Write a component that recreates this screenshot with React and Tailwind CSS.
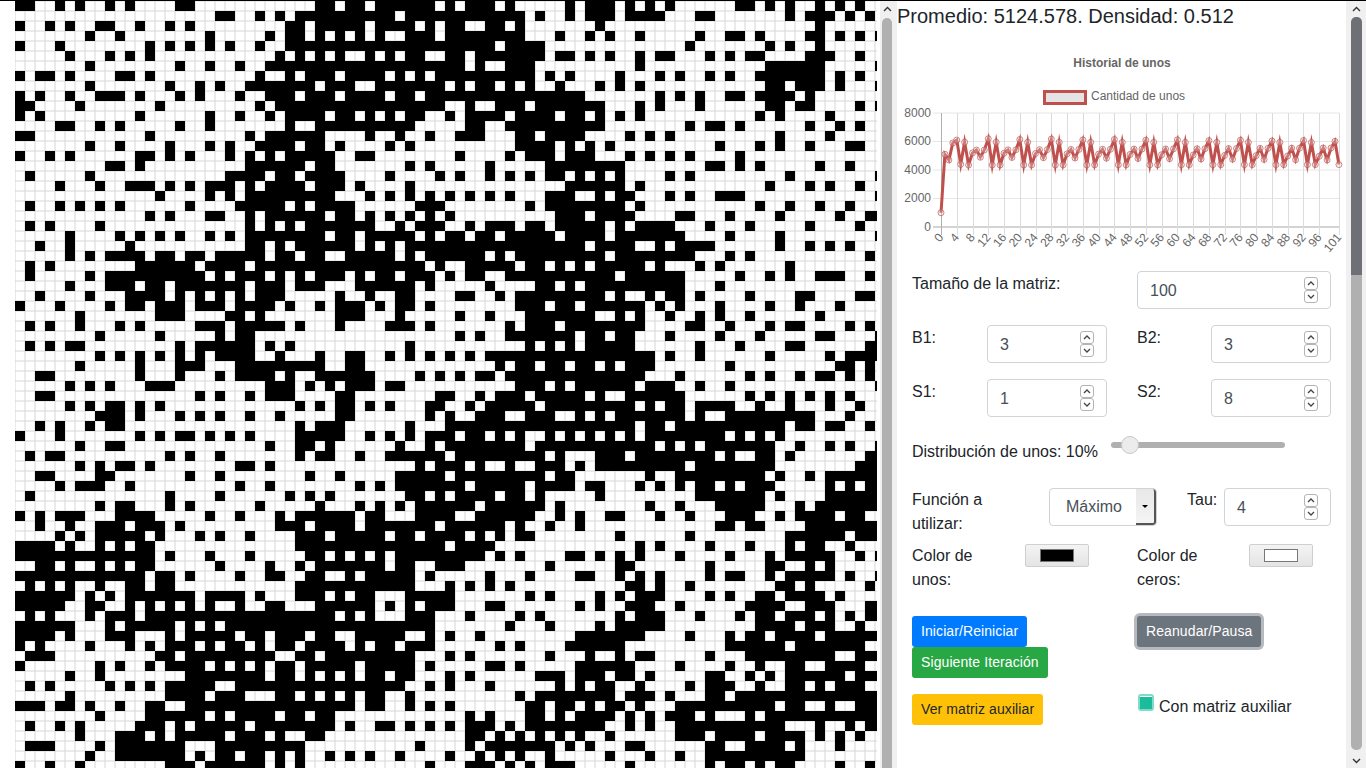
import React from "react";

const A = ["0-1 4 6 9 11 16-17","20-21 24 26 28","0 3 5 8-9 12 15 17 27-28","7 10 19 25 27-28","0 4 13 15 17 19 21 24 27-28","5 9 11 13 26 28","7 16 19 22 25-28","0 2-3 5 10-11 13 24 27","7 15 18 20 23-28","0 2 5 8-10 12 16 18 22 25-27","0-1 6 14 24 26-28","0 2 12 19 22 25 27-28","4-5 8 10 16 19 27","0-1 13 23 25-28","7 10 15 19 21 24-27","0 3 5 12-13 15 17 21 23 25 27-28","9-10 12 23-28","1 7 21-24 26-27","4 8 11-13 15 17 19-21 23 25-28","14 19 21 23-28","1 4 6 8 10 17 22-26 28","13 15 19-20 23 25-28","1 3 8 23 25 27","5 10 12 14 16 19 21 23-28","2 5 11 23-24 26 28","5 7 9-12 14-15 17-18 20-24 26-27","1 3 12-17 19-22 24-28","1 7 9-18 20 22-24 26 28","5 9-11 13-14 16-22 24-26 28","2 7 11-14 16 18 20 22 24-26","0 4 9 11-12 14-16 18-20 22-25 27","6 14-16 21-22 24","1 3 6 10 12 18-20 22-26 28","8 14 20 22-23","1 3 5-6 16 18-23 25 27","8 10 12 14 16 18 20-23 26","6 12 16-18 22-28","2-3 12 16 20 22-25 27","5 7 9 13-15 25-27",
"2-3 18 20 23 25-27","5 7 9-10 12 14 28","8-10 12 16 18 20 23 26","2 4 7 9-10 28","0 4 12 14 16-17 19 21 23 28","6 9-10 25 28","1 3-4 15 17 20 28","6 8 10-11 13 22-23 25","2-3 8-9 17 20","4 6-8 11 22 25","1 15 20 27","8 10-11 15 17 24","0 2 4-6 10-13 19 22 26 28","2 5 8-10 12-14 16 26-28","4 6 8-12 14 18 20 23 28","0-3 5 8 10 12-13 28","0-13 15 19 23","2-3 5 8 10 12-13 20 25 28","0-12 14-15 17 22 25-26","1 3 5 8 11-12 14-15 28","0-5 7 9 11-17 19-22 24 28","0-4 7-8 11 13 15 17 19 22 25-26","1 3 7 9-11 13-28","0-5 9 11-15 17 19 21-28","0-3 5 9-11 15 17-21 23-24 26-28","0 2 7 11 13 15-17 19 21-22 24 26-27","1-3 14-15 17-25 28","0 8 10 13 15-18 20 22 24 26-27","5 8 17-24 26-27","1 3 9 11 13 15-19 22-28","5 15-18 20-22 26-27","0-2 4-5 7 10 13-14 17-28","8 13-18 20 22-25 27-28","1 4 6 12-14 16 18-22 24-28","6 10-12 14 16-20 22-24 26","1-3 8 10-16 20-28","7 10-16 18 20-21 23-24 26 28","0 3 6 15-17 19-24 26 28"];

const B = ["1-2 4-5 7-12 14 16-18 20 26 28","0-8 10-21 23 26 28","1-5 7-10 12 14-15 18-19 21","1 3 5 7 10-12 14-21 25 28","0-18 20-23","1 3 6 8 10-11 14-15 17-23 25-26 28","0-15 17 20-22","0-2 4-7 9 11 13-22 24 26","0 2-4 7-13 15 17-18 20 22 25","0-2 4-7 9-10 12-27","0-13 16 19-21 23-28","0-1 3-4 6 8 10-11 14 16-19 21-24 26-27","1-10 16-17 20-28","0-1 6 9 12 15-17 21-22 24-27","0-1 3 8 10 21-24 26 28","0-2 5-6 15 20 22-24 26-28","1-2 10 12 18 24-28","0-3 8 13 15 18 20 22 24-25 27","1-3 5 10 26-28","0-2 6 8 10 12 14 16 18 20 24-26","1-4 11-13 22 24-28","0-1 3-4 6 8 10 12 14 25-27","0-6 9 11-13 16 18-20 22-23 25-28","0-1 3-4 6-10 12 14-15 17-18 20-24 26-28","0-4 6 8 10-27","0-1 4-8 10 12-17 19 21-28","0-11 13 16-20 22-23 25 27","1-3 5 7-8 10-12 14 16-17 20-28","0-1 5-10 12 18 23-24 26 28","3 6 9-10 15-16 19 21-28","1 3-5 7 9-10 12 21-23 25-26 28","3-5 9 15 18 22-28","3 8-10 12 20 22-24 26-28","15 17 20-26 28","10 22 24 26 28","1 4-5 8 10 12 14 16 18-28","0-1 4-5 19 21-22 24-25 27-28","1-6 11 13 15 17-18 20-28","0 2 4-6 8-9 21-23 25 27-28",
"3-4 13-14 17 19-21 23-27","1 3-4 6 8 12-13 16 18-22 24-28","3-4 12 14 17-19 22-24 27","1-3 10 14-28","0-3 6 8 10 12-14 16-17 19 21 24 26 28","0 2 9 12 14-21 23-28","1-2 5 8-13 15-23 25","11 13-15 17 20 23-25 27","0 3 9-13 15-23 25-26","5 7 9-15 17-21 23-26 28","0 2 10-11 13 15-18 20-21 23","1 5 7 9 11-16 18-23 25","0-4 6-7 11-14 17-22 25 27","1-4 6-12 14-19 21 24 27","0-1 3-7 9-10 12-15 17 19 21-22","0-13 15-18","0-1 3 5 7 9-17 19 21 26-27","1-7 9-10 13-15 24","0-1 4 6-10 12 18 22 27-28","0-10 14 16 18 20","0-1 3 5-6 10-14 22 24","1-6 8 10 12-14 18-19 27","0-2 4 6 10-12 16 21 23","0-12 20 24","1-2 5-9 12 14 17 27-28","0-3 5 7-8 10-12 19 21 26-28","0 2-10 14 16 24 28","0-4 6-10 12 18-19 21 27-28","0 2 4 6-7 9-10 14 16 23-25 27-28","0-9 12 14 18 25 27","0 2 4 6-7 10 21 23-28","0-4 6-7 10 12 14 22-23 25-26 28","1-2 16 18 22-23 25 27-28","0-2 4 7-8 10 12 14 16-18 20 22-28","0-1 16-17 19 21 23 25 27","11 16 18-24 26 28","2 4 6 9 14 17 19 21 24","12 16-18 20 22 24-26"];

const C = ["0-1 3 5 7 14-15 17 19 22 24 26","0-1 3-6 10-11 19 21-23 25 27","0 22","1 4 10 13-14 16 21-22 24 26 28","9 17 19 22","1 4 6-7 11 13 15-16 21-23 26","4 17-22 28","2 6 8 11 13 16-22 24 26","0 2 4 17-18 20-22 24 28","6 8 10 13-14 16-19 21","0 4 6 10 17-18 20-21 26 28","0 2 4 16 18 23","0 9 11-12 14 21 24 26","3 5 7 18 23","1 12 16 18 21 25-26","3 5 7 9 14","0-2 11-12 14 16 22 25","0 2 7 9 19 28","0-2 4 17 21 23 26","0 2-3 7 9 12-14 28","0-2 4 16 19 22 25","0-3 8-9 13 18 24 27-28","0 2 4-7 11 15 21 26","0 2-8 13 18 28","0-3 6 8-11 18 21 23 25","0 2-9 13 15 27","0-4 6 10 12 19","0-1 3-8 14 17 19 22-24 27","0-8 12","0 2 5 7-8 10 15 20-21 26-27","0-4 6 8 12 17 20 24","2 4 7 10 12 15 22","0-4 9-10 13 17 19-20 25 27","0 2-3 7 12 16 22-23 28","0-3 10 14 19-20 27-28","0-5 7 10 17 23 25-28","1 3-5 13 24-25 27","0-4 8 15 17 20 22-23 25 27","0-3 5-7 10 13 28",
"0 3-8 15 17 19 21 23 25","0-3 5 7-8 10-13 16 19 23 26","0 2-8 10 13-21 25","0-3 5-6 8-18 20-21 23-24 27","1 3 5-12 14 16 18","0-5 7 9 11-17 20 23 25 28","0-2 4-11 13 16-17 19 27-28","0-8 10-17 26-28","5 8-16 18 21 23-28","0 4 6 8 10-11 13 15-17 23 25 27-28","0 10-16 18 23-28","5 8 12-16 20 22-28","1-2 6 9 13-15 18 20-23 25-26","12-13 15-16 21-28","2 9 19-24 26-28","4 6 11 15 19 21-22 25","0 2 4 8 13 17 19-23 26 28","2-3 11 17-18 21 23","2 4 6 11 13-14 17 19-23 25 28","3-4 6 9 18-19 21 27","0 2 4-6 11 13 16-17 19-22 24","0 3-5 8 15-18 21-23 27-28","2 4-6 10 14 16-17 19-21 23 25 27-28","0 2-6 16-19 21-23 26","0-4 9 13 15-16 18-21 23-28","0-2 13-18 20-26","2 4-5 11 15-23 26-28","0-3 8 13 16 19-20 23-26","0 2-3 5 11-12 15 17 19-24 26-28","0-1 4 9 11-13 16 19-20 22 24-26","0-1 3-5 7 11-12 14-28","1-2 4 8-17 19-20 23 26-28","0-1 3 5 7-9 11 15 17-28","0 3 5 8-18 22 25 27-28","1 8-10 12-15 17-20 22 24 26","3-4 11-12 15-18 20 24","1 5 8 11-20","3 11 13-14 16 18-19 24 27"];

function parseRow(s, offset) {
  if (!s) return [];
  return s.split(" ").map((t) => {
    const p = t.split("-").map(Number);
    return [p[0] + offset, (p[1] ?? p[0]) + offset];
  });
}

const cellPath = Array.from({ length: 77 }, (_, r) =>
  [...parseRow(A[r], 0), ...parseRow(B[r], 29), ...parseRow(C[r], 58)]
    .map(([a, b]) => `M${a * 10} ${r * 10}h${(b - a + 1) * 10}v10h-${(b - a + 1) * 10}z`)
    .join("")
).join("");

let gridPath = "";
for (let i = 0; i <= 87; i++) gridPath += `M${i * 10} 0V770`;
for (let i = 0; i <= 77; i++) gridPath += `M0 ${i * 10}H870`;

function Grid() {
  return (
    <svg width="862" height="767" viewBox="0 0 862 767" className="block shrink-0">
      <rect x="0" y="0" width="862" height="767" fill="#fff" />
      <path d={gridPath} stroke="#d6d6d6" strokeWidth="1" fill="none" />
      <path d={cellPath} fill="#000" shapeRendering="crispEdges" />
    </svg>
  );
}

const series = (() => {
  const out = [1000, 5100, 4700, 5900, 6100, 4400, 5950, 4350];
  for (let i = 8; i <= 101; i++) {
    const k = (i - 8) / 93;
    const m = i % 8;
    const v = [5200 - 250 * k, 5400 + 150 * k, 4900 - 200 * k, 5400 + 150 * k, 6200 - 150 * k, 4350 + 30 * k, 5950 - 20 * k, 4350 + 30 * k][m];
    out.push(v + (i % 16 === 4 ? -40 : 0));
  }
  return out;
})();

const px = (i) => 941 + i * 3.94;
const py = (v) => 227 - (114 * v) / 8000;
const ticks = [...Array.from({ length: 25 }, (_, i) => i * 4), 101];

function Chart() {
  const line = series.map((v, i) => `${i ? "L" : "M"}${px(i).toFixed(1)} ${py(v).toFixed(1)}`).join("");
  return (
    <svg width="449" height="234" viewBox="897 31 449 234" className="block shrink-0" fontFamily="'Liberation Sans', Arial, sans-serif">
      <text x="1122" y="67" textAnchor="middle" fontSize="12" fontWeight="700" fill="#666">Historial de unos</text>
      <rect x="1044.5" y="91.5" width="41" height="12" fill="#e4e4e4" stroke="#c0504d" strokeWidth="3" />
      <text x="1091" y="100" fontSize="12" fill="#666">Cantidad de unos</text>
      {[8000, 6000, 4000, 2000, 0].map((v) => (
        <g key={v}>
          <line x1="933" x2="1339" y1={py(v)} y2={py(v)} stroke={v === 0 ? "#a8a8a8" : "#e6e6e6"} strokeWidth="1" />
          <text x="931" y={py(v) + 3.5} textAnchor="end" fontSize="12" fill="#666">{v}</text>
        </g>
      ))}
      {ticks.map((t) => (
        <g key={t}>
          <line x1={Math.round(px(t)) + 0.5} x2={Math.round(px(t)) + 0.5} y1="113" y2="235" stroke={t === 0 ? "#b0b0b0" : "#dcdcdc"} strokeWidth="1" />
          <text x={px(t)} y="239" textAnchor="end" fontSize="12" fill="#666" transform={`rotate(-50 ${px(t)} 235)`}>{t}</text>
        </g>
      ))}
      <path d={line} fill="none" stroke="#c0504d" strokeWidth="3" strokeLinejoin="miter" strokeMiterlimit="10" />
      {series.map((v, i) => (
        <circle key={i} cx={px(i)} cy={py(v)} r="3" fill="rgba(224,224,224,0.32)" stroke="rgba(196,84,81,0.7)" strokeWidth="1" />
      ))}
    </svg>
  );
}

function Chevron({ up, className }) {
  return (
    <svg width="8" height="5" viewBox="0 0 8 5" className={className}>
      <path d={up ? "M1 4L4 1L7 4" : "M1 1L4 4L7 1"} fill="none" stroke="#444" strokeWidth="1.3" />
    </svg>
  );
}

function Spinner() {
  return (
    <div className="flex flex-col items-center">
      <div className="w-[14px] h-[13px] border border-[#b4b4b4] rounded-[3px] flex items-center justify-center bg-white">
        <Chevron up />
      </div>
      <div className="w-[14px] h-[13px] border border-[#b4b4b4] rounded-[3px] flex items-center justify-center bg-white">
        <Chevron />
      </div>
    </div>
  );
}

function Num({ value, w, pl }) {
  return (
    <div className={`${w} h-[38px] border border-[#ced4da] rounded-[4px] bg-white flex items-center justify-between ${pl} pr-[12px] text-[#495057]`}>
      <span className="pt-[2px]">{value}</span>
      <Spinner />
    </div>
  );
}

function ColorBtn({ swatch }) {
  return (
    <div className="w-[64px] h-[23px] mt-px border border-[#cfcfcf] rounded-[2px] bg-gradient-to-b from-[#f4f4f4] to-[#e4e4e4] flex items-center justify-center">
      <div className={`w-[34px] h-[13px] border border-[#777] ${swatch}`} />
    </div>
  );
}

function ScrollArrow({ up, className }) {
  return (
    <svg width="9" height="6" viewBox="0 0 9 6" className={className}>
      <path d={up ? "M1 5L4.5 1.5L8 5" : "M1 1L4.5 4.5L8 1"} fill="none" stroke="#333" strokeWidth="1.4" />
    </svg>
  );
}

export default function App() {
  return (
    <div className="w-[1366px] h-screen overflow-hidden border-t border-black bg-white flex font-['Liberation_Sans',Arial,sans-serif] text-[16px] leading-[24px] text-[#212529]">
      <div className="w-[15px] shrink-0" />
      <Grid />
      <div className="w-[3px] shrink-0" />
      <div className="w-[17px] shrink-0 bg-[#f0f0f0] flex flex-col items-center">
        <ScrollArrow up className="mt-[5px] -ml-[3px]" />
        <div className="w-[10px] grow mt-[6px] -mb-2 -ml-[3px] rounded-t-[5px] bg-[#b0b0b0]" />
      </div>

      <div className="w-[449px] shrink-0 flex flex-col">
        <div className="h-[30px] text-[20px] leading-[30px]">Promedio: 5124.578. Densidad: 0.512</div>
        <Chart />
        <div className="pl-[15px] flex flex-col mt-[6px]">
          <div className="flex">
            <div className="w-[225px] pt-px">Tamaño de la matriz:</div>
            <Num value="100" w="w-[194px]" pl="pl-[12px]" />
          </div>
          <div className="flex mt-[16px]">
            <div className="w-[75px] pt-px">B1:</div>
            <Num value="3" w="w-[120px]" pl="pl-[12px]" />
            <div className="w-[30px]" />
            <div className="w-[74px] pt-px">B2:</div>
            <Num value="3" w="w-[120px]" pl="pl-[12px]" />
          </div>
          <div className="flex mt-[16px]">
            <div className="w-[75px] pt-px">S1:</div>
            <Num value="1" w="w-[120px]" pl="pl-[12px]" />
            <div className="w-[30px]" />
            <div className="w-[74px] pt-px">S2:</div>
            <Num value="8" w="w-[120px]" pl="pl-[12px]" />
          </div>
          <div className="flex mt-[22px]">
            <div className="w-[199px] pt-px">Distribución de unos: 10%</div>
            <div className="relative w-[174px] h-[6px] mt-[3px] rounded-[3px] bg-[#b0b0b0]">
              <div className="absolute left-[10px] -top-[6px] w-[18px] h-[18px] rounded-full border border-[#c8c8c8] bg-[#ececec]" />
            </div>
          </div>
          <div className="flex mt-[23px]">
            <div className="w-[137px] pt-px">Función a<br />utilizar:</div>
            <div className="w-[108px] h-[38px] mt-px border border-[#ced4da] rounded-[4px] bg-white flex justify-between text-[#495057] overflow-hidden">
              <span className="pl-[16px] leading-[36px]">Máximo</span>
              <div className="w-[20px] h-full bg-gradient-to-b from-[#e8e8e8] to-[#f4f4f4] border-r-2 border-b-2 border-[#555] rounded-r-[3px] flex items-center justify-center">
                <div className="w-0 h-0 border-l-[3px] border-r-[3px] border-t-[3px] border-l-transparent border-r-transparent border-t-black" />
              </div>
            </div>
            <div className="w-[30px]" />
            <div className="w-[37px] pt-px">Tau:</div>
            <div className="mt-px"><Num value="4" w="w-[107px]" pl="pl-[12px]" /></div>
          </div>
          <div className="flex mt-[7px]">
            <div className="w-[113px] pt-px">Color de<br />unos:</div>
            <ColorBtn swatch="bg-black" />
            <div className="w-[48px]" />
            <div className="w-[112px] pt-px">Color de<br />ceros:</div>
            <ColorBtn swatch="bg-white" />
          </div>
          <div className="flex mt-[24px]">
            <div className="w-[225px] flex flex-col items-start text-[14px] leading-[31px] text-white tracking-[0.09px]">
              <div className="h-[31px] px-[9px] rounded-[3px] bg-[#007bff]">Iniciar/Reiniciar</div>
              <div className="h-[31px] px-[9px] rounded-[3px] bg-[#28a745]">Siguiente Iteración</div>
            </div>
            <div className="h-[31px] px-[9px] rounded-[3px] bg-[#6c757d] text-[14px] leading-[31px] tracking-[0.1px] text-white ring-[3px] ring-[#b6babe]">Reanudar/Pausa</div>
          </div>
          <div className="flex mt-[16px]">
            <div className="w-[226px]">
              <div className="w-fit h-[31px] px-[9px] rounded-[3px] bg-[#ffc107] text-[14px] leading-[31px] tracking-[0.1px]">Ver matriz auxiliar</div>
            </div>
            <div className="flex items-start">
              <div className="w-[16px] h-[17px] border-2 border-[#7fdcc8] rounded-[3px] bg-white flex items-center justify-center">
                <div className="w-[12px] h-[12px] bg-[#1abc9c]" />
              </div>
              <span className="ml-[5px] pt-[1px]">Con matriz auxiliar</span>
            </div>
          </div>
        </div>
      </div>

      <div className="w-[20px] shrink-0 bg-[#f0f0f0] flex flex-col items-center">
        <ScrollArrow up className="mt-[5px] ml-px" />
        <div className="w-[11px] h-[258px] mt-[5px] ml-px rounded-t-[5px] bg-[#6e7075]" />
        <div className="w-[11px] h-[475px] ml-px rounded-b-[5px] bg-[#b0b0b0]" />
        <ScrollArrow className="mt-[8px] ml-px" />
      </div>
    </div>
  );
}
